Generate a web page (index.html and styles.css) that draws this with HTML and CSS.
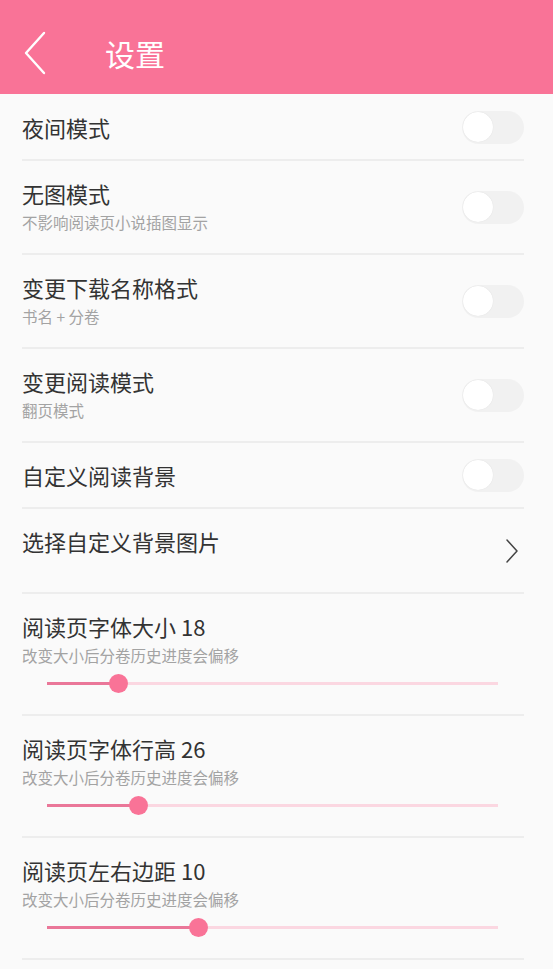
FILE: index.html
```html
<!DOCTYPE html>
<html lang="zh-CN">
<head>
    <meta charset="UTF-8">
    <meta name="viewport" content="width=device-width, initial-scale=1.0">
    <title>设置</title>
    <link rel="stylesheet" href="styles.css">
</head>
<body>

    <div class="toolbar">
        <svg class="back" width="24" height="44" viewBox="0 0 24 44">
            <path d="M21 2 L3 22 L21 42" fill="none" stroke="#fff" stroke-width="2.4" stroke-linecap="round" stroke-linejoin="round"/>
        </svg>
        <h1>设置</h1>
    </div>

    <div class="settings">
        <div class="row row-single">
            <div class="row-text">
                <div class="row-title">夜间模式</div>
            </div>
            <div class="switch"><span class="knob"></span></div>
        </div>

        <div class="row">
            <div class="row-text">
                <div class="row-title">无图模式</div>
                <div class="row-sub">不影响阅读页小说插图显示</div>
            </div>
            <div class="switch"><span class="knob"></span></div>
        </div>

        <div class="row">
            <div class="row-text">
                <div class="row-title">变更下载名称格式</div>
                <div class="row-sub">书名 + 分卷</div>
            </div>
            <div class="switch"><span class="knob"></span></div>
        </div>

        <div class="row">
            <div class="row-text">
                <div class="row-title">变更阅读模式</div>
                <div class="row-sub">翻页模式</div>
            </div>
            <div class="switch"><span class="knob"></span></div>
        </div>

        <div class="row row-single">
            <div class="row-text">
                <div class="row-title">自定义阅读背景</div>
            </div>
            <div class="switch"><span class="knob"></span></div>
        </div>

        <div class="row row-link">
            <div class="row-text">
                <div class="row-title">选择自定义背景图片</div>
            </div>
            <svg class="arrow" width="14" height="26" viewBox="0 0 14 26">
                <path d="M2 2 L12 13 L2 24" fill="none" stroke="#444" stroke-width="1.5" stroke-linecap="round" stroke-linejoin="round"/>
            </svg>
        </div>

        <div class="row row-slider">
            <div class="row-title">阅读页字体大小 18</div>
            <div class="row-sub">改变大小后分卷历史进度会偏移</div>
            <div class="slider">
                <div class="slider-fill" style="width: 71px"></div>
                <span class="thumb" style="left: 71px"></span>
            </div>
        </div>

        <div class="row row-slider">
            <div class="row-title">阅读页字体行高 26</div>
            <div class="row-sub">改变大小后分卷历史进度会偏移</div>
            <div class="slider">
                <div class="slider-fill" style="width: 91px"></div>
                <span class="thumb" style="left: 91px"></span>
            </div>
        </div>

        <div class="row row-slider">
            <div class="row-title">阅读页左右边距 10</div>
            <div class="row-sub">改变大小后分卷历史进度会偏移</div>
            <div class="slider">
                <div class="slider-fill" style="width: 151px"></div>
                <span class="thumb" style="left: 151px"></span>
            </div>
        </div>
    </div>

</body>
</html>
```

FILE: styles.css
```css
* {
    box-sizing: border-box;
}
body {
    margin: 0;
    padding: 0;
    background-color: #FAFAFA;
    font-family: 'Noto Sans CJK SC', 'Noto Sans', sans-serif;
    overflow: hidden;
}
.toolbar {
    height: 94px;
    padding-top: 12px;
    background-color: #F97397;
    display: flex;
    align-items: center;
}
.toolbar .back {
    margin-left: 23px;
}
.toolbar h1 {
    margin: 0 0 0 58px;
    font-size: 30px;
    font-weight: normal;
    color: #FFFFFF;
    line-height: 40px;
}
.settings {
    margin: 1px 29px 0 22px;
}
.row {
    display: flex;
    align-items: center;
    justify-content: space-between;
    border-bottom: 2px solid #EDEDED;
    height: 94px;
}
.row .row-text {
    padding-bottom: 4px;
}
.row-single {
    height: 66px;
}
.row-single .row-text {
    padding-bottom: 0;
}
.row-link {
    height: 85px;
    padding-top: 17px;
    align-items: flex-start;
}
.row-link .arrow {
    margin-top: 12px;
    margin-right: 5px;
}
.row-title {
    font-size: 22px;
    line-height: 30px;
    color: #333333;
}
.row-sub {
    font-size: 15.5px;
    line-height: 22px;
    margin-top: 3px;
    color: #A3A3A3;
}
/* Переключатель */
.switch {
    width: 62px;
    height: 33px;
    border-radius: 17px;
    background-color: #F1F1F1;
    position: relative;
    flex-shrink: 0;
}
.switch .knob {
    position: absolute;
    left: 1px;
    top: 1.5px;
    width: 30px;
    height: 30px;
    border-radius: 50%;
    background-color: #FFFFFF;
    box-shadow: 0 0 1px rgba(0, 0, 0, 0.12);
}
.row-slider {
    display: block;
    height: 122px;
    padding-top: 17px;
}
.slider {
    position: relative;
    margin: 7px 0 0 25px;
    width: 451px;
    height: 20px;
}
.slider::before {
    content: '';
    position: absolute;
    left: 0;
    right: 0;
    top: 8.5px;
    height: 3px;
    background-color: #FBD7E1;
}
.slider-fill {
    position: absolute;
    left: 0;
    top: 8.5px;
    height: 3px;
    background-color: #EA7799;
}
.thumb {
    position: absolute;
    top: 1px;
    width: 19px;
    height: 19px;
    margin-left: -9.5px;
    border-radius: 50%;
    background-color: #F97397;
}
```
